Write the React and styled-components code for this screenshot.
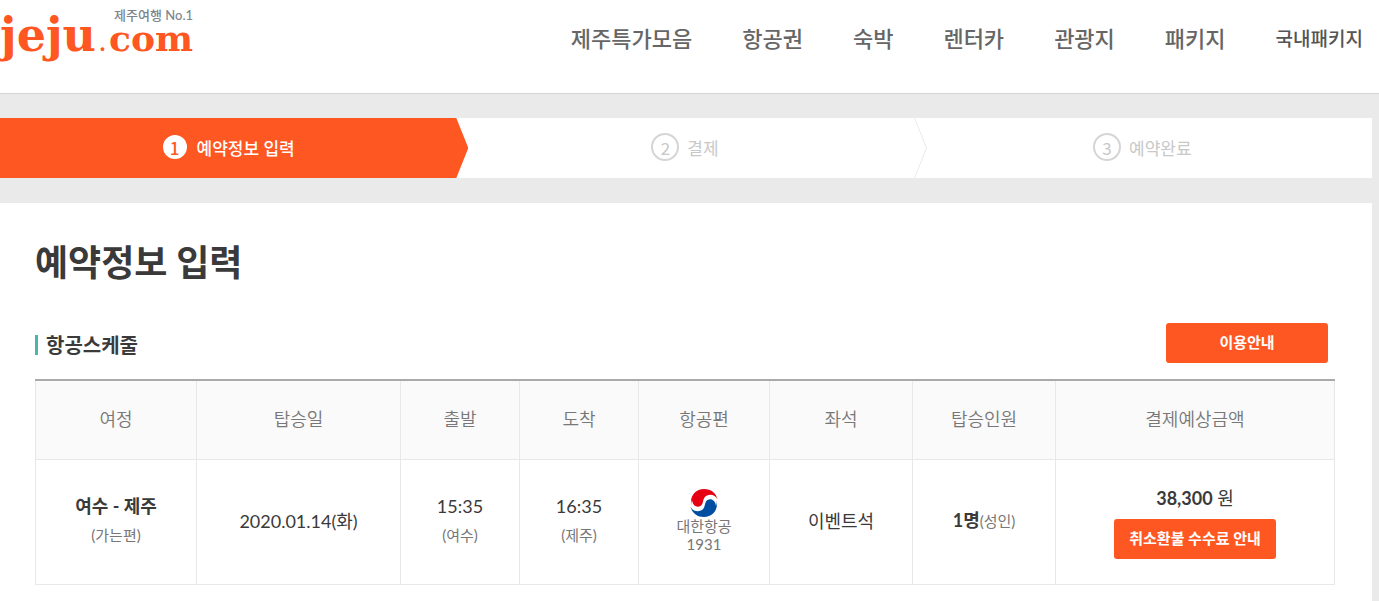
import styled, { createGlobalStyle, css } from "styled-components";

const menus = [
  "제주특가모음",
  "항공권",
  "숙박",
  "렌터카",
  "관광지",
  "패키지",
];

const steps = ["예약정보 입력", "결제", "예약완료"];

function Header() {
  return (
    <HeaderBar>
      <Logo href="#">
        <LogoName>jeju</LogoName>
        <LogoDot>.</LogoDot>
        <LogoDomain>com</LogoDomain>
        <Tagline>제주여행 No.1</Tagline>
      </Logo>
      <Nav>
        {menus.map((menu) => (
          <NavLink href="#" key={menu}>
            {menu}
          </NavLink>
        ))}
        <NavLink href="#" $small>
          국내패키지
        </NavLink>
      </Nav>
    </HeaderBar>
  );
}

function Steps({ current }) {
  return (
    <StepList>
      {steps.map((step, i) => (
        <Step key={step} $active={i === current}>
          <StepNumber $active={i === current}>{i + 1}</StepNumber>
          {step}
          {i === 1 && (
            <Chevron viewBox="0 0 14 60">
              <path d="M0.5 0L12.5 30L0.5 60" fill="none" stroke="#eaeaea" />
            </Chevron>
          )}
        </Step>
      ))}
    </StepList>
  );
}

function AirlineMark() {
  return (
    <Mark viewBox="0 0 28 28" role="img" aria-label="대한항공">
      <path
        d="M1.5 18C-1 8 5 0 14 0C21 0 26 4 27.6 10.500C25 4.500 17.500 4.500 14.500 8.500C12.500 11.500 13.500 15 10.500 17C7 19 2.500 16.500 2 11C1 13 1 16 1.500 18Z"
        fill="#e60012"
      />
      <path
        d="M26.500 10C29 20 23 28 14 28C7 28 2 24 0.400 17.500C3 23.500 10.500 23.500 13.500 19.500C15.500 16.500 14.500 13 17.500 11C21 9 25.500 11.500 26 17C27 15 27 12 26.500 10Z"
        fill="#004ea2"
      />
    </Mark>
  );
}

function Schedule() {
  return (
    <Table>
      <colgroup>
        <Col $width={161} />
        <Col $width={204} />
        <Col $width={119} />
        <Col $width={119} />
        <Col $width={131} />
        <Col $width={143} />
        <Col $width={143} />
        <col />
      </colgroup>
      <thead>
        <tr>
          <Th scope="col">여정</Th>
          <Th scope="col">탑승일</Th>
          <Th scope="col">출발</Th>
          <Th scope="col">도착</Th>
          <Th scope="col">항공편</Th>
          <Th scope="col">좌석</Th>
          <Th scope="col">탑승인원</Th>
          <Th scope="col">결제예상금액</Th>
        </tr>
      </thead>
      <tbody>
        <tr>
          <Td>
            <Strong>여수 - 제주</Strong>
            <Note>(가는편)</Note>
          </Td>
          <Td>2020.01.14(화)</Td>
          <Td>
            15:35
            <Note>(여수)</Note>
          </Td>
          <Td>
            16:35
            <Note>(제주)</Note>
          </Td>
          <Td>
            <AirlineMark />
            <Flight>대한항공</Flight>
            <Flight>1931</Flight>
          </Td>
          <Td>이벤트석</Td>
          <Td>
            <Strong>1명</Strong>
            <Small>(성인)</Small>
          </Td>
          <Td>
            <Price>
              <Strong>38,300</Strong> 원
            </Price>
            <Button type="button">취소환불 수수료 안내</Button>
          </Td>
        </tr>
      </tbody>
    </Table>
  );
}

function App() {
  return (
    <>
      <GlobalStyle />
      <Header />
      <Page>
        <Steps current={0} />
        <Content>
          <Title>예약정보 입력</Title>
          <SectionHead>
            <SectionTitle>항공스케줄</SectionTitle>
            <Button type="button">이용안내</Button>
          </SectionHead>
          <Schedule />
        </Content>
      </Page>
    </>
  );
}

export default App;

const GlobalStyle = createGlobalStyle`
  * {
    box-sizing: border-box;
  }

  body {
    margin: 0;
    background: #eaeaea;
    color: #3a3a3a;
    font-family: Lato, "Noto Sans CJK KR", sans-serif;
    overflow-x: hidden;
  }
`;

const HeaderBar = styled.header`
  display: flex;
  justify-content: space-between;
  align-items: center;
  height: 94px;
  padding-right: 16px;
  background: #fff;
  border-bottom: 1px solid #d5d5d5;
`;

const Logo = styled.a`
  position: relative;
  display: flex;
  align-items: baseline;
  align-self: flex-start;
  padding-top: 5px;
  color: #ff5722;
  font-family: "DejaVu Serif", serif;
  font-weight: 700;
  line-height: 60px;
  text-decoration: none;
`;

const LogoName = styled.span`
  font-size: 46px;
`;

const LogoDot = styled.span`
  padding: 0 3px;
  font-size: 20px;
`;

const LogoDomain = styled.span`
  font-size: 36px;
`;

const Tagline = styled.span`
  position: absolute;
  top: 6px;
  right: 0;
  color: #7b858e;
  font-family: Lato, "Noto Sans CJK KR", sans-serif;
  font-size: 13px;
  font-weight: 500;
  line-height: 18px;
  white-space: nowrap;
`;

const Nav = styled.nav`
  display: flex;
  align-items: center;
  gap: 50px;
  padding-bottom: 16px;
`;

const NavLink = styled.a`
  color: ${(props) => (props.$small ? "#555" : "#666")};
  font-size: ${(props) => (props.$small ? "19px" : "22px")};
  font-weight: 500;
  line-height: 32px;
  text-decoration: none;
  white-space: nowrap;
`;

const Page = styled.main`
  padding: 24px 7px 0 0;
`;

const StepList = styled.ol`
  display: grid;
  grid-template-columns: repeat(3, 1fr);
  margin: 0 0 25px;
  padding: 0;
  background: #fff;
  list-style: none;
`;

const Step = styled.li`
  position: relative;
  display: flex;
  justify-content: center;
  align-items: center;
  gap: 8px;
  height: 60px;
  padding: 0 2px 2px 0;
  color: #c8c8c8;
  font-size: 17px;

  ${(props) =>
    props.$active &&
    css`
      color: #fff;
      font-weight: 500;
      z-index: 0;

      /* background with the arrow tip reaching into the next step */
      &::before {
        content: "";
        position: absolute;
        z-index: -1;
        inset: 0 -11px 0 0;
        background: #ff5722;
        clip-path: polygon(
          0 0,
          calc(100% - 12px) 0,
          100% 50%,
          calc(100% - 12px) 100%,
          0 100%
        );
      }
    `}
`;

const StepNumber = styled.span`
  display: flex;
  justify-content: center;
  align-items: center;
  width: 28px;
  height: 28px;
  border: 2px solid ${(props) => (props.$active ? "#ff5722" : "#d5d5d5")};
  border-radius: 50%;
  background: #fff;
  color: ${(props) => (props.$active ? "#ff5722" : "#c8c8c8")};
  font-family: "Noto Sans CJK KR", sans-serif;
`;

const Chevron = styled.svg`
  position: absolute;
  top: 0;
  left: calc(100% - 1px);
  width: 14px;
  height: 60px;
`;

const Content = styled.section`
  min-height: 398px;
  padding: 32px 37px 16px 35px;
  background: #fff;
`;

const Title = styled.h1`
  margin: 0;
  font-size: 36px;
  font-weight: 700;
  line-height: 54px;
`;

const SectionHead = styled.div`
  display: flex;
  justify-content: space-between;
  align-items: center;
  margin: 34px 7px 16px 0;
`;

const SectionTitle = styled.h2`
  display: flex;
  align-items: center;
  gap: 8px;
  margin: 0;
  padding-top: 4px;
  font-size: 20px;
  font-weight: 700;
  line-height: 30px;

  &::before {
    content: "";
    width: 3px;
    height: 20px;
    background: #4db6ac;
  }
`;

const Button = styled.button`
  width: 162px;
  height: 40px;
  padding: 0 0 3px;
  border: 0;
  border-radius: 3px;
  background: #ff5722;
  color: #fff;
  font-family: inherit;
  font-size: 15px;
  font-weight: 700;
  cursor: pointer;
`;

const Table = styled.table`
  width: 100%;
  table-layout: fixed;
  border-collapse: collapse;
  border-top: 2px solid #aaa;
`;

const Col = styled.col`
  width: ${(props) => props.$width}px;
`;

const Th = styled.th`
  height: 79px;
  padding: 0 0 4px;
  border: 1px solid #e8e8e8;
  border-top: 0;
  background: #fafafa;
  color: #777;
  font-size: 18px;
  font-weight: 350;
`;

const Td = styled.td`
  height: 125px;
  padding: 0 0 1px;
  border: 1px solid #e8e8e8;
  font-size: 18px;
  line-height: 29px;
  text-align: center;
`;

const Strong = styled.strong`
  font-weight: 700;
`;

const Small = styled.span`
  color: #777;
  font-size: 15px;
`;

const Note = styled(Small)`
  display: block;
`;

const Flight = styled(Small)`
  display: block;
  line-height: 18px;
`;

const Price = styled.div`
  margin-bottom: 6px;
`;

const Mark = styled.svg`
  display: block;
  width: 28px;
  height: 28px;
  margin: 0 auto;
`;
